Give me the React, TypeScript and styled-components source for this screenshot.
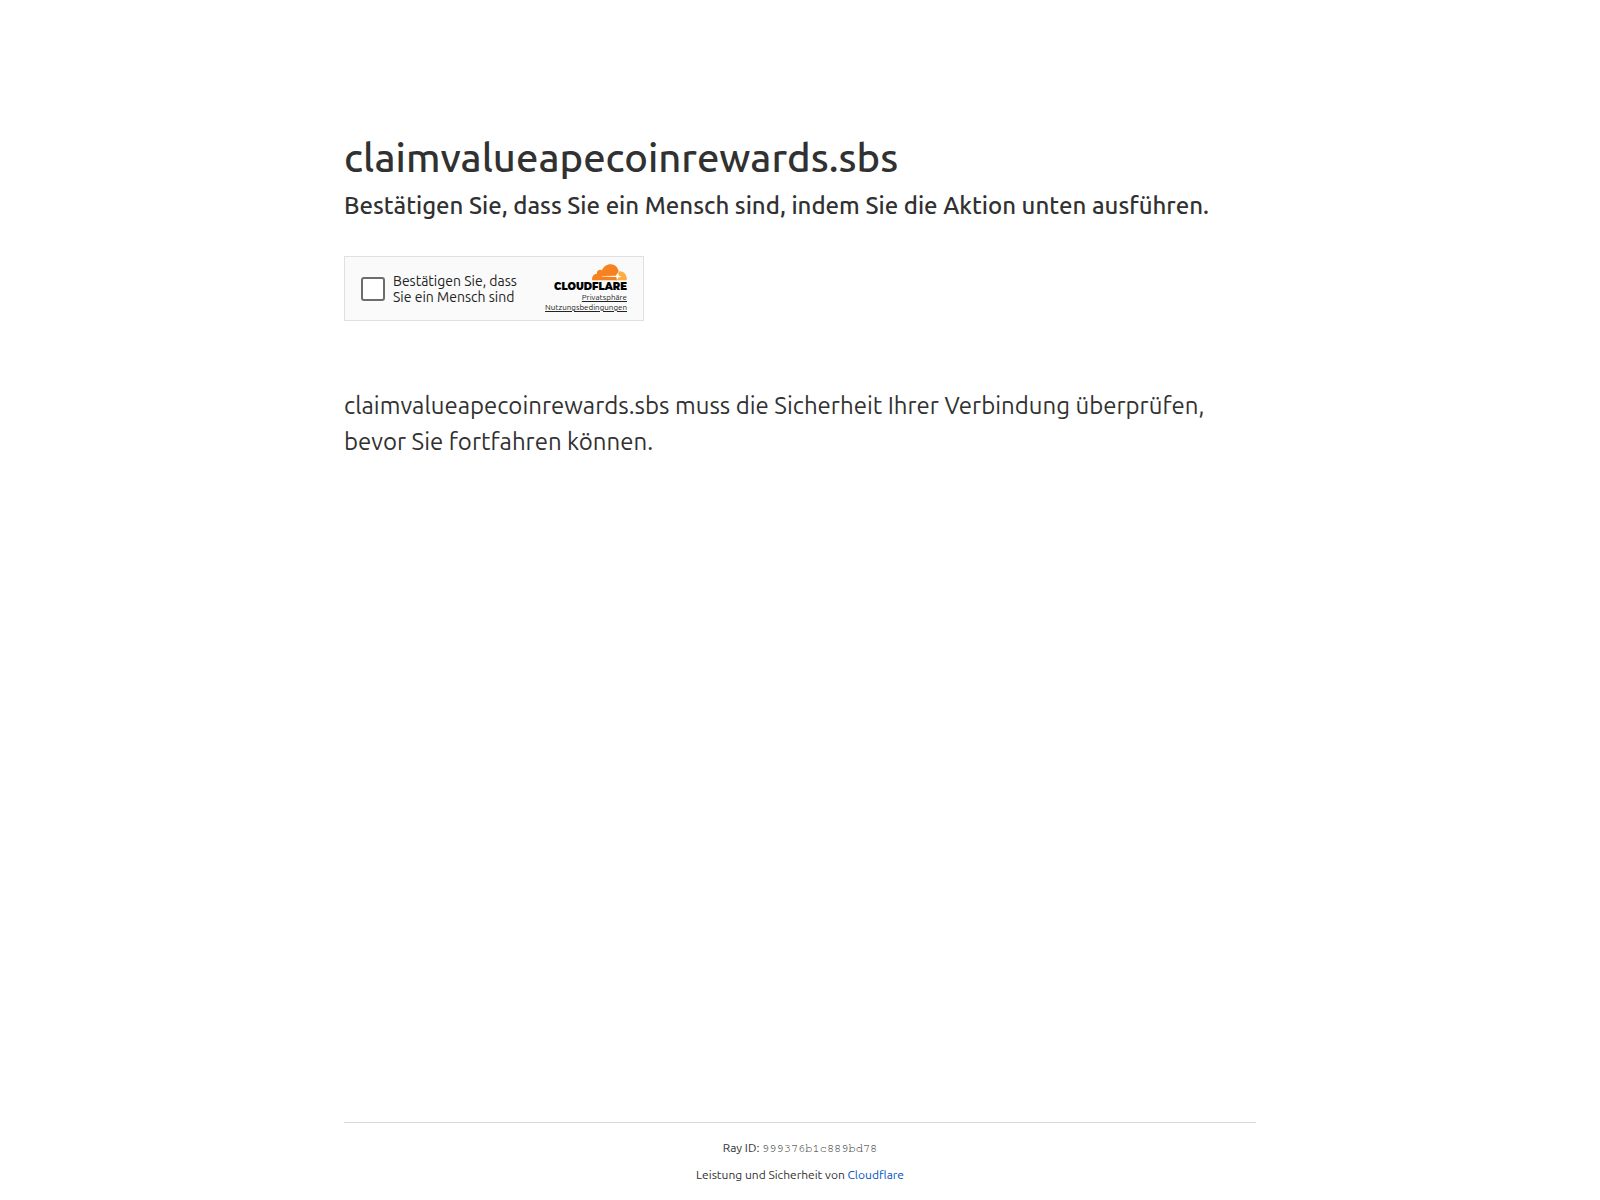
import React from "react";
import styled, { createGlobalStyle } from "styled-components";

const GlobalStyle = createGlobalStyle`
  *, *::before, *::after { box-sizing: border-box; }
  html { height: 100%; }
  body {
    margin: 0;
    min-height: 100%;
    background: #fff;
    color: #313131;
    font-family: Ubuntu, "Noto Sans", sans-serif;
  }
  h1, h2, p { margin: 0; }
`;

const Page = styled.div`
  display: flex;
  flex-direction: column;
  min-height: 100vh;
`;

const Main = styled.main`
  flex: 1;
  width: 100%;
  max-width: 960px;
  margin: 128px auto 0;
  padding: 0 24px;
`;

const Title = styled.h1`
  font-size: 40px;
  font-weight: 500;
  line-height: 60px;
`;

const Subtitle = styled.h2`
  font-size: 24px;
  font-weight: 500;
  line-height: 36px;
`;

const Message = styled.p`
  font-size: 24px;
  font-weight: 400;
  line-height: 36px;
`;

const Widget = styled.section`
  display: flex;
  align-items: center;
  justify-content: space-between;
  width: 300px;
  height: 65px;
  margin: 32px 0 67px;
  padding: 0 16px;
  border: 1px solid #e0e0e0;
  background: #fafafa;
`;

const CheckLabel = styled.label`
  display: flex;
  align-items: center;
  gap: 8px;
  color: #232323;
  font-size: 14px;
  line-height: 16px;
  white-space: nowrap;
`;

const CheckBox = styled.input`
  appearance: none;
  width: 24px;
  height: 24px;
  margin: 0;
  border: 2px solid #6d6d6d;
  border-radius: 3px;
  background: #fff;
`;

const Branding = styled.div`
  display: flex;
  flex-direction: column;
  align-items: flex-end;
`;

const CloudIcon = styled.svg`
  display: block;
  width: 35px;
  height: 17px;
`;

const Wordmark = styled.span`
  color: #000;
  font-family: Montserrat, "DejaVu Sans", sans-serif;
  font-size: 10px;
  font-weight: 900;
  line-height: 12px;
`;

const WidgetLink = styled.a`
  color: #232323;
  font-size: 8px;
  line-height: 10px;
`;

const Footer = styled.footer`
  width: 100%;
  max-width: 960px;
  margin: 0 auto;
  padding: 0 24px;
  font-size: 12px;
  line-height: 18px;
  text-align: center;
`;

const FooterInner = styled.div`
  display: flex;
  flex-direction: column;
  gap: 9px;
  padding: 16px 0;
  border-top: 1px solid #d9d9d9;
`;

const RayId = styled.code`
  font-family: "Courier 10 Pitch", FreeMono, "Nimbus Mono PS", "Liberation Mono", monospace;
  font-size: 12px;
`;

const FooterLink = styled.a`
  color: #0051c3;
  text-decoration: none;
`;

function Cloud() {
  return (
    <CloudIcon viewBox="0 0 36 17" preserveAspectRatio="none" aria-hidden="true">
      <path
        fill="#f6821f"
        d="M.1 16.200C-.3 13 1.700 10 5 9.800 4.500 6.900 7.700 4.700 10.200 6.300 11.900 2.400 15.200.2 18.900.2c4.200 0 7.500 2.600 8.500 6.600L25.300 16.200Z"
      />
      <path
        fill="#fbad41"
        d="M28 7.200c4.600-.2 8 3.300 7.800 8.200 0 .5-.2.8-.7.8H24.300l1.100-3.400Z"
      />
      <path
        fill="#fff"
        d="M10 12.100 24.500 11.700 26.700 8.400 27.500 11.600 30.500 12.600 27.300 13.600 26.300 15.600 24.900 13 10 12.500Z"
      />
    </CloudIcon>
  );
}

export default function App() {
  const host = "claimvalueapecoinrewards.sbs";
  return (
    <Page>
      <GlobalStyle />
      <Main>
        <Title>{host}</Title>
        <Subtitle>
          Bestätigen Sie, dass Sie ein Mensch sind, indem Sie die Aktion unten ausführen.
        </Subtitle>
        <Widget>
          <CheckLabel htmlFor="human">
            <CheckBox id="human" type="checkbox" />
            <span>
              Bestätigen Sie, dass
              <br />
              Sie ein Mensch sind
            </span>
          </CheckLabel>
          <Branding>
            <Cloud />
            <Wordmark>CLOUDFLARE</Wordmark>
            <WidgetLink href="#privacy">Privatsphäre</WidgetLink>
            <WidgetLink href="#terms">Nutzungsbedingungen</WidgetLink>
          </Branding>
        </Widget>
        <Message>
          {`${host} muss die Sicherheit Ihrer Verbindung überprüfen, bevor Sie fortfahren können.`}
        </Message>
      </Main>
      <Footer>
        <FooterInner>
          <div>
            Ray ID: <RayId>999376b1c889bd78</RayId>
          </div>
          <div>
            Leistung und Sicherheit von <FooterLink href="#cloudflare">Cloudflare</FooterLink>
          </div>
        </FooterInner>
      </Footer>
    </Page>
  );
}
